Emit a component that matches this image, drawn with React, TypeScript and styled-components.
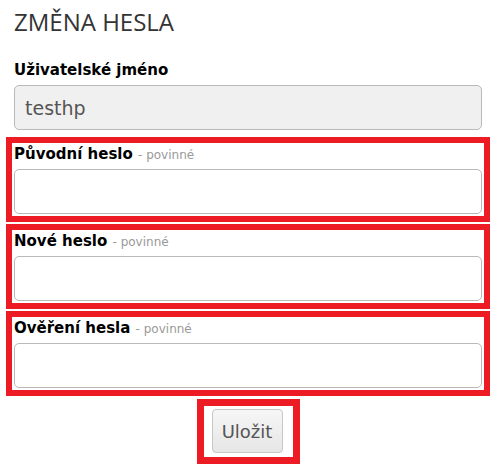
import React from "react";
import styled, { createGlobalStyle } from "styled-components";

const GlobalStyle = createGlobalStyle`
  html, body {
    margin: 0;
    padding: 0;
    background: #ffffff;
  }
  body {
    font-family: "DejaVu Sans", Verdana, sans-serif;
    color: #000;
  }
`;

const Page = styled.form`
  width: 484px;
  padding: 0 2px 0 6px;
`;

const Heading = styled.h1`
  margin: 0;
  padding: 6px 8px 0;
  height: 60px;
  box-sizing: border-box;
  font-family: "Open Sans", "Liberation Sans", sans-serif;
  font-weight: 400;
  font-size: 24px;
  line-height: 32px;
  color: #333;
`;

const Group = styled.div`
  padding: 0 8px;
  margin-bottom: 7px;
`;

const Highlight = styled.div`
  border: 6px solid #ed1c24;
  padding: 1px 2px 2px;
  margin-bottom: 2px;
`;

const Label = styled.label`
  display: block;
  height: 20px;
  line-height: 20px;
  margin-bottom: 5px;
  font-size: 15px;
  font-weight: 700;
  color: #000;
  white-space: nowrap;
`;

const Required = styled.span`
  font-size: 12px;
  font-weight: 400;
  color: #999;
`;

const Input = styled.input<{ $disabled?: boolean }>`
  display: block;
  box-sizing: border-box;
  width: 468px;
  height: 45px;
  margin: 0;
  padding: 0 10px;
  border: 1px solid #b9b9b9;
  border-radius: 5px;
  background: ${({ $disabled }) => ($disabled ? "#f0f0f0" : "#fff")};
  font-family: "DejaVu Sans", Verdana, sans-serif;
  font-size: 19px;
  color: #555;
  outline: none;
`;

const Actions = styled.div`
  display: flex;
  justify-content: center;
  margin-top: 3px;
`;

const ButtonFrame = styled.div`
  border: 7px solid #ed1c24;
  padding: 3px 10px 4px 8px;
`;

const Button = styled.button`
  box-sizing: border-box;
  width: 71px;
  height: 44px;
  padding: 0;
  border: 1px solid #c6c6c6;
  border-radius: 4px;
  background: linear-gradient(#f6f6f6, #e6e6e6);
  font-family: "DejaVu Sans", Verdana, sans-serif;
  font-size: 18px;
  color: #555;
`;

const fields = [
  { id: "old", label: "Původní heslo" },
  { id: "new", label: "Nové heslo" },
  { id: "confirm", label: "Ověření hesla" },
];

export default function App() {
  return (
    <>
      <GlobalStyle />
      <Page onSubmit={e => e.preventDefault()}>
        <Heading>ZMĚNA HESLA</Heading>
        <Group>
          <Label htmlFor="user">Uživatelské jméno</Label>
          <Input id="user" $disabled readOnly value="testhp" />
        </Group>
        {fields.map(f => (
          <Highlight key={f.id}>
            <Label htmlFor={f.id}>
              {f.label} <Required>- povinné</Required>
            </Label>
            <Input id={f.id} type="password" />
          </Highlight>
        ))}
        <Actions>
          <ButtonFrame>
            <Button type="submit">Uložit</Button>
          </ButtonFrame>
        </Actions>
      </Page>
    </>
  );
}
